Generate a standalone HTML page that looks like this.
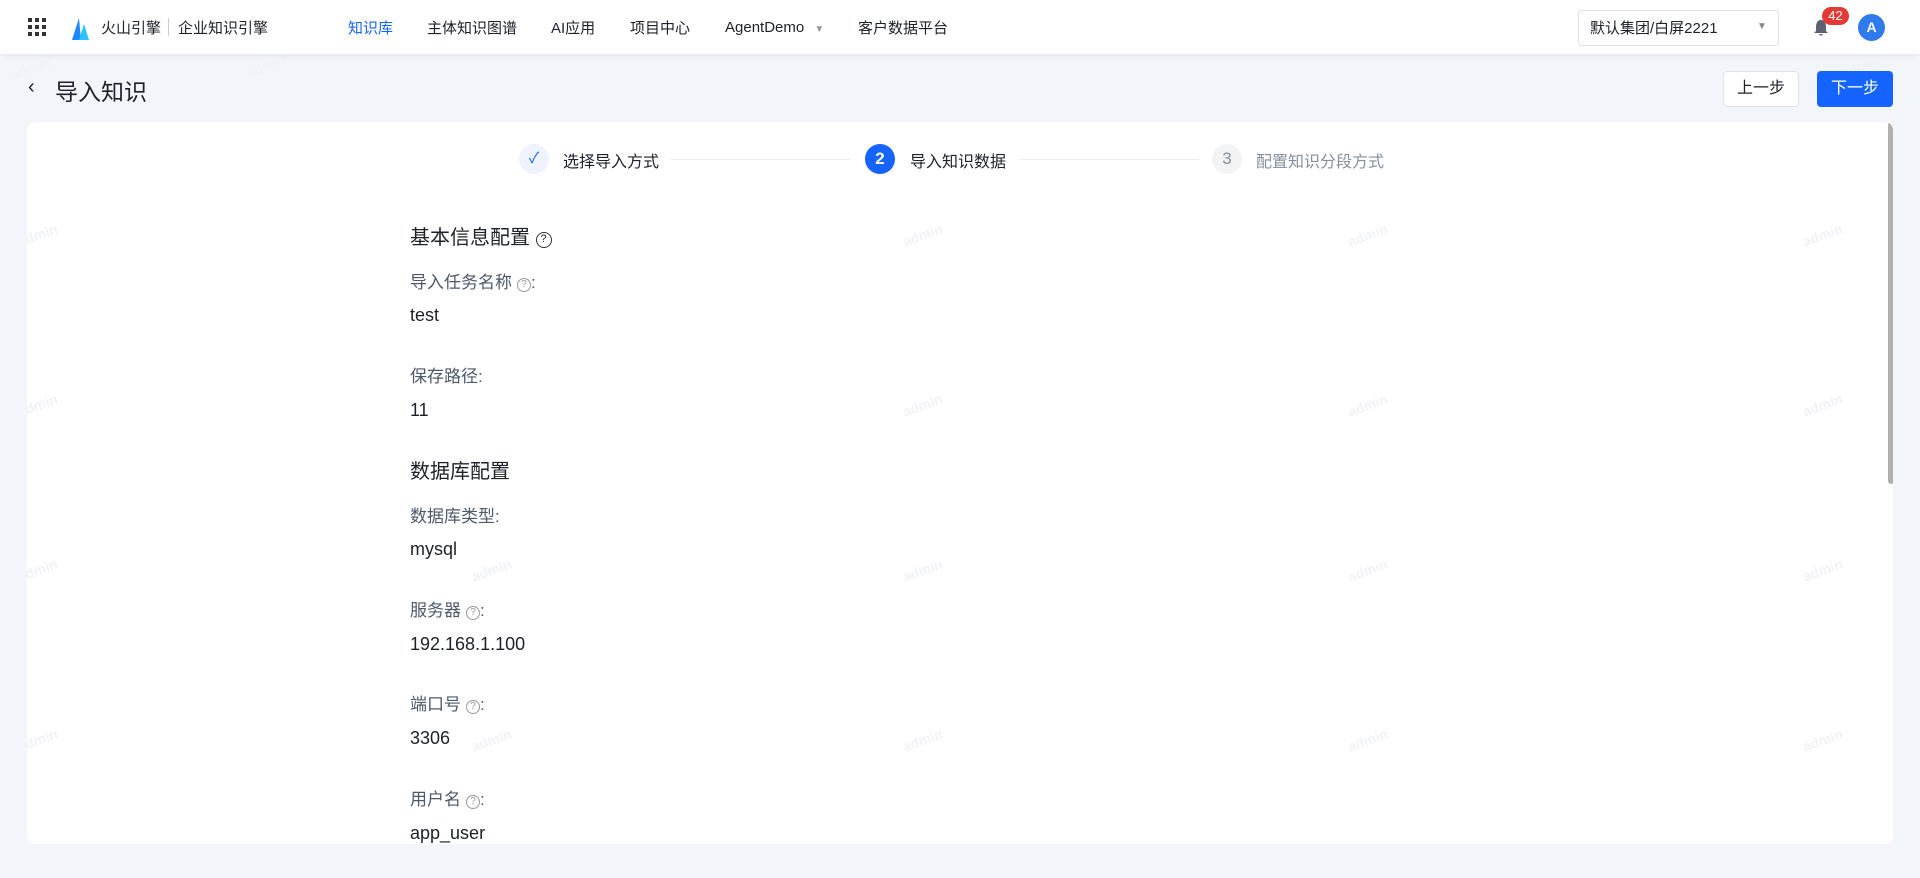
<!DOCTYPE html>
<html><head><meta charset="utf-8"><style>
*{margin:0;padding:0;box-sizing:border-box}
body{width:1920px;height:878px;overflow:hidden;background:#f2f5fa;font-family:"Liberation Sans","Noto Sans CJK SC",sans-serif;color:#1d2129;position:relative}
.hdr{position:absolute;left:0;top:0;width:1920px;height:54px;background:#fff;box-shadow:0 2px 6px rgba(0,0,0,.06);z-index:2}
.a{position:absolute;white-space:nowrap}
.nav{top:17px;font-size:15px;color:#1d2129}
.card{position:absolute;left:27px;top:122px;width:1866px;height:722px;background:#fff;border-radius:8px;overflow:hidden}
.lbl{font-size:17px;color:#4e5969}
.val{font-size:18px;color:#1d2129}
.h{font-size:20px;color:#1d2129}
.q{display:inline-block;width:14px;height:14px;border:1px solid #999;border-radius:50%;font-size:10px;line-height:12px;text-align:center;color:#999;vertical-align:1px;margin-left:5px}
.wm{position:absolute;font-size:14px;color:#f0f2f5;transform:rotate(-20deg);font-weight:bold}
.circ{position:absolute;width:30px;height:30px;border-radius:50%;text-align:center;line-height:30px;font-size:17px}
</style></head><body>
<div class="hdr">
 <svg class="a" style="left:28px;top:18px" width="18" height="18"><g fill="#333"><rect x="0" y="0" width="4" height="4"/><rect x="7" y="0" width="4" height="4"/><rect x="14" y="0" width="4" height="4"/><rect x="0" y="7" width="4" height="4"/><rect x="7" y="7" width="4" height="4"/><rect x="14" y="7" width="4" height="4"/><rect x="0" y="14" width="4" height="4"/><rect x="7" y="14" width="4" height="4"/><rect x="14" y="14" width="4" height="4"/></g></svg>
 <svg class="a" style="left:70px;top:16px" width="20" height="24"><path d="M2 24 L9 2 L11 24Z" fill="#1e88ff"/><path d="M9 24 L14 8 L19 24Z" fill="#2cc3ff"/></svg>
 <div class="a" style="left:101px;top:17px;font-size:15px">火山引擎</div>
 <div class="a" style="left:168px;top:18px;width:1px;height:18px;background:#ccc"></div>
 <div class="a" style="left:178px;top:17px;font-size:15px">企业知识引擎</div>
 <div class="a nav" style="left:348px;color:#1664ff">知识库</div>
 <div class="a nav" style="left:427px">主体知识图谱</div>
 <div class="a nav" style="left:551px">AI应用</div>
 <div class="a nav" style="left:630px">项目中心</div>
 <div class="a nav" style="left:725px;top:19px">AgentDemo <span style="color:#999;font-size:10px;margin-left:6px">▼</span></div>
 <div class="a nav" style="left:858px">客户数据平台</div>
 <div class="a" style="left:1578px;top:10px;width:201px;height:36px;border:1px solid #e0e3e8;border-radius:4px"></div>
 <div class="a" style="left:1590px;top:17px;font-size:15px">默认集团/白屏2221</div>
 <div class="a" style="left:1757px;top:21px;font-size:10px;color:#888">▼</div>
 <svg class="a" style="left:1813px;top:19px" width="16" height="18"><path d="M8 1 C4 1 3 5 3 8 L3 12 L1 14 L15 14 L13 12 L13 8 C13 5 12 1 8 1Z M6 15 L10 15 L8 17Z" fill="#5c6270"/></svg>
 <div class="a" style="left:1822px;top:7px;width:27px;height:18px;border-radius:9px;background:#e53935;color:#fff;font-size:13px;text-align:center;line-height:18px">42</div>
 <div class="a" style="left:1858px;top:14px;width:27px;height:27px;border-radius:50%;background:#2f7bed;color:#fff;font-size:14px;font-weight:bold;text-align:center;line-height:27px">A</div>
</div>
<div class="wm" style="left:10px;top:60px">admin</div><div class="wm" style="left:245px;top:58px">admin</div><div class="wm" style="left:1840px;top:58px">admin</div>
<div class="a" style="left:28px;top:76px;font-size:20px">‹</div>
<div class="a" style="left:55px;top:73px;font-size:23px;color:#1d2129">导入知识</div>
<div class="a" style="left:1723px;top:71px;width:76px;height:36px;border:1px solid #dfe2e7;border-radius:4px;background:#fff;font-size:16px;text-align:center;line-height:34px">上一步</div>
<div class="a" style="left:1817px;top:71px;width:76px;height:36px;border-radius:4px;background:#1664ff;color:#fff;font-size:16px;text-align:center;line-height:36px">下一步</div>
<div class="card">
 <div class="wm" style="left:-10px;top:105px">admin</div><div class="wm" style="left:875px;top:105px">admin</div><div class="wm" style="left:1320px;top:105px">admin</div><div class="wm" style="left:1775px;top:105px">admin</div>
 <div class="wm" style="left:-10px;top:275px">admin</div><div class="wm" style="left:875px;top:275px">admin</div><div class="wm" style="left:1320px;top:275px">admin</div><div class="wm" style="left:1775px;top:275px">admin</div>
 <div class="wm" style="left:-10px;top:440px">admin</div><div class="wm" style="left:444px;top:440px">admin</div><div class="wm" style="left:875px;top:440px">admin</div><div class="wm" style="left:1320px;top:440px">admin</div><div class="wm" style="left:1775px;top:440px">admin</div>
 <div class="wm" style="left:-10px;top:610px">admin</div><div class="wm" style="left:444px;top:610px">admin</div><div class="wm" style="left:875px;top:610px">admin</div><div class="wm" style="left:1320px;top:610px">admin</div><div class="wm" style="left:1775px;top:610px">admin</div>
 <div class="circ" style="left:492px;top:22px;background:#eef3ff;color:#1664ff;font-size:15px">✓</div>
 <div class="a" style="left:536px;top:26px;font-size:16px">选择导入方式</div>
 <div class="a" style="left:644px;top:37px;width:180px;height:1px;background:#eceef2"></div>
 <div class="circ" style="left:838px;top:22px;background:#1664ff;color:#fff;font-weight:bold">2</div>
 <div class="a" style="left:883px;top:26px;font-size:16px">导入知识数据</div>
 <div class="a" style="left:992px;top:37px;width:180px;height:1px;background:#eceef2"></div>
 <div class="circ" style="left:1185px;top:22px;background:#f2f3f5;color:#86909c">3</div>
 <div class="a" style="left:1229px;top:26px;font-size:16px;color:#86909c">配置知识分段方式</div>
 <div class="a h" style="left:383px;top:99px">基本信息配置 <span style="display:inline-block;width:16px;height:16px;border:1.5px solid #333;border-radius:50%;font-size:11px;line-height:13px;text-align:center;vertical-align:2px">?</span></div>
 <div class="a lbl" style="left:383px;top:146px">导入任务名称<span class="q">?</span>:</div>
 <div class="a val" style="left:383px;top:183px">test</div>
 <div class="a lbl" style="left:383px;top:240px">保存路径:</div>
 <div class="a val" style="left:383px;top:278px">11</div>
 <div class="a h" style="left:383px;top:333px">数据库配置</div>
 <div class="a lbl" style="left:383px;top:380px">数据库类型:</div>
 <div class="a val" style="left:383px;top:417px">mysql</div>
 <div class="a lbl" style="left:383px;top:474px">服务器<span class="q">?</span>:</div>
 <div class="a val" style="left:383px;top:512px">192.168.1.100</div>
 <div class="a lbl" style="left:383px;top:568px">端口号<span class="q">?</span>:</div>
 <div class="a val" style="left:383px;top:606px">3306</div>
 <div class="a lbl" style="left:383px;top:663px">用户名<span class="q">?</span>:</div>
 <div class="a val" style="left:383px;top:701px">app_user</div>
 <div class="a" style="left:1861px;top:0;width:6px;height:362px;border-radius:3px;background:#b0b0b0"></div>
</div>
</body></html>
